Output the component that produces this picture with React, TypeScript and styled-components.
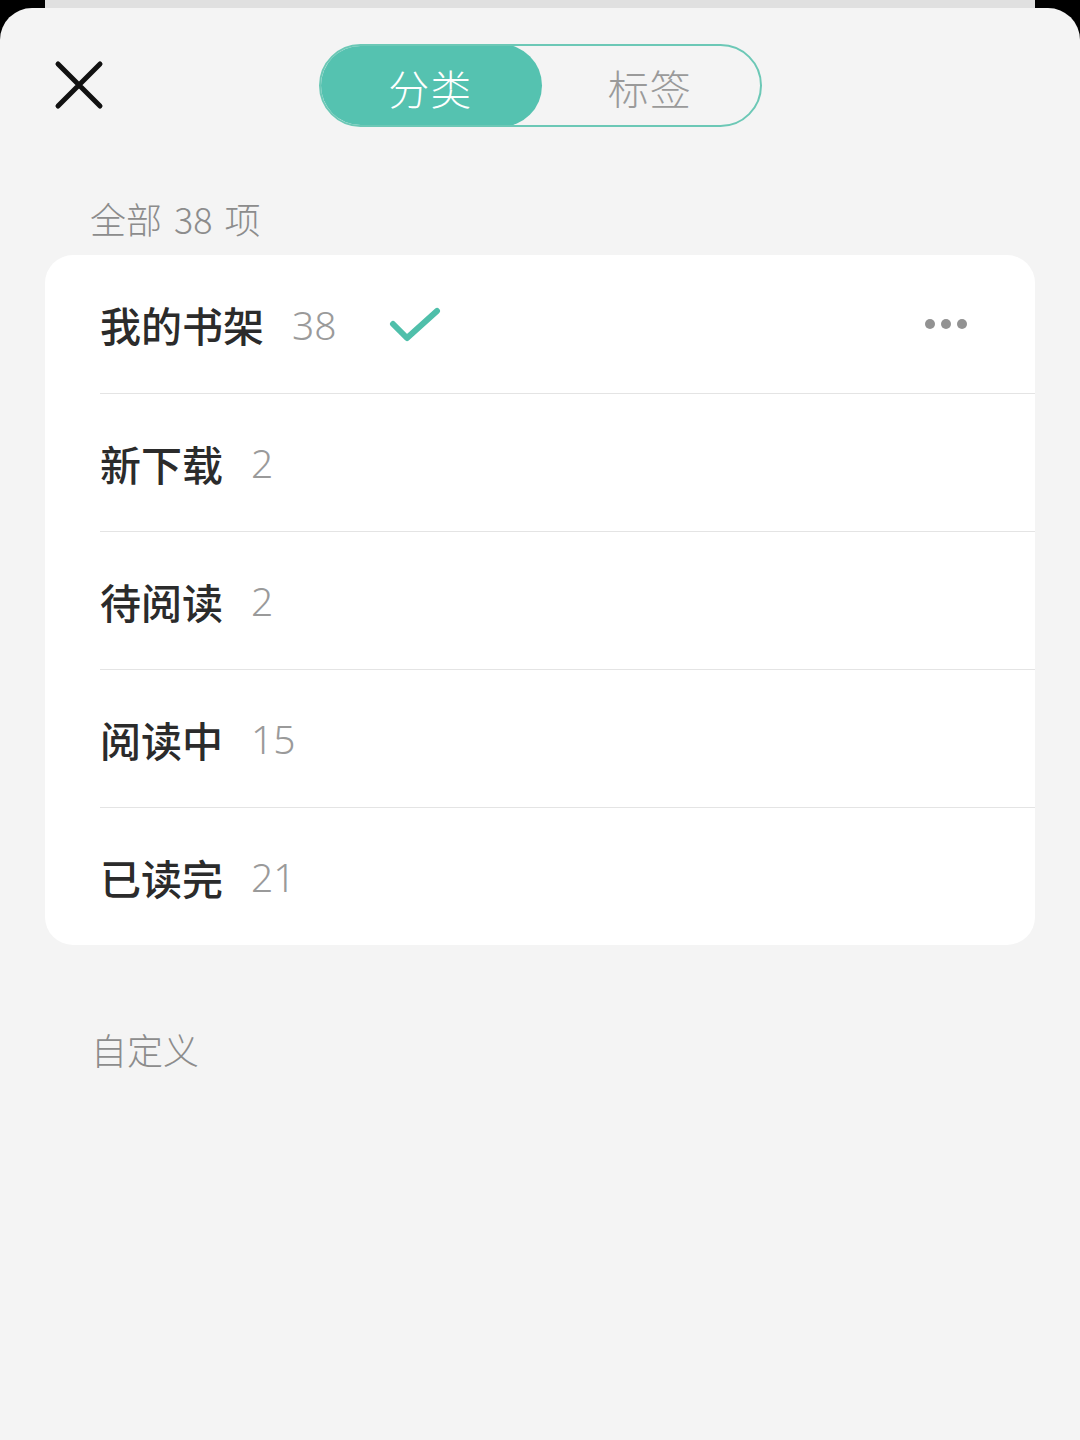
import {useState} from 'react';
import styled, {createGlobalStyle} from 'styled-components';

const GlobalStyle = createGlobalStyle`
    html, body {
        margin: 0;
        padding: 0;
        background: #000;
    }
    body {
        font-family: "Noto Sans CJK SC", "Noto Sans", sans-serif;
    }
`;

const categories = [
    {name: '我的书架', count: 38},
    {name: '新下载', count: 2},
    {name: '待阅读', count: 2},
    {name: '阅读中', count: 15},
    {name: '已读完', count: 21},
];

/**
 * 分类 / 标签 弹出面板
 */
const App = () => {
    const [tab, setTab] = useState<'category' | 'tag'>('category');
    const [selected] = useState(0);

    return <Screen>
        <GlobalStyle/>
        <BackSheet/>
        <Sheet>
            <Header>
                <CloseButton type="button" aria-label="关闭">
                    <svg width="50" height="50" viewBox="0 0 50 50">
                        <path d="M4 4 L46 46 M46 4 L4 46" stroke="#111" strokeWidth="5" strokeLinecap="round"/>
                    </svg>
                </CloseButton>
                <Segment>
                    <SegmentItem $active={tab === 'category'} onClick={() => setTab('category')}>分类</SegmentItem>
                    <SegmentItem $active={tab === 'tag'} onClick={() => setTab('tag')}>标签</SegmentItem>
                </Segment>
            </Header>

            <SectionTitle>全部 38 项</SectionTitle>
            <Card>
                {categories.map((c, i) => (
                    <Row key={c.name}>
                        <RowName>{c.name}</RowName>
                        <RowCount>{c.count}</RowCount>
                        {i === selected && <>
                            <Check width="52" height="38" viewBox="0 0 52 38">
                                <path d="M4 18 L18 32 L48 5" fill="none" stroke="#4fbfaa" strokeWidth="6" strokeLinecap="round" strokeLinejoin="round"/>
                            </Check>
                            <More>
                                <Dot/><Dot/><Dot/>
                            </More>
                        </>}
                    </Row>
                ))}
            </Card>

            <CustomTitle>自定义</CustomTitle>
        </Sheet>
    </Screen>;
};

export default App;


const Screen = styled.div`
    width: 1080px;
    height: 1440px;
    background: #000;
    position: relative;
    overflow: hidden;
    display: flex;
    flex-direction: column;
`;

const BackSheet = styled.div`
    height: 8px;
    margin: 0 45px;
    background: #e0e0e0;
    flex-shrink: 0;
`;

const Sheet = styled.div`
    flex: 1;
    background: #f4f4f4;
    border-radius: 32px 32px 0 0;
    display: flex;
    flex-direction: column;
`;

const Header = styled.div`
    height: 120px;
    margin-top: 36px;
    position: relative;
    display: flex;
    justify-content: center;
    align-items: flex-start;
`;

const CloseButton = styled.button`
    position: absolute;
    left: 54px;
    top: 16px;
    width: 50px;
    height: 50px;
    padding: 0;
    border: none;
    background: none;
    display: flex;
`;

const Segment = styled.div`
    width: 443px;
    height: 83px;
    box-sizing: border-box;
    border: 2px solid #6cc8b6;
    border-radius: 42px;
    display: flex;
    overflow: hidden;
`;

const SegmentItem = styled.div<{ $active: boolean }>`
    flex: 1;
    display: flex;
    align-items: center;
    justify-content: center;
    font-size: 41px;
    font-weight: 300;
    letter-spacing: 1px;
    border-radius: 42px;
    margin: -2px;
    padding-top: 2px;
    cursor: pointer;
    color: ${p => p.$active ? '#fff' : '#9a9a9a'};
    background: ${p => p.$active ? '#55c2b0' : 'transparent'};
`;

const SectionTitle = styled.div`
    padding-left: 90px;
    font-size: 36px;
    font-weight: 300;
    color: #8c8c8c;
    line-height: 48px;
    word-spacing: 4px;
    margin-top: 30px;
    margin-bottom: 13px;
`;

const Card = styled.div`
    margin: 0 45px;
    background: #fff;
    border-radius: 28px;
    display: flex;
    flex-direction: column;
`;

const Row = styled.div`
    box-sizing: border-box;
    height: 138px;
    display: flex;
    align-items: center;
    margin-left: 55px;
    position: relative;

    & + & {
        border-top: 1.5px solid #e4e4e4;
    }
`;

const RowName = styled.span`
    font-size: 41px;
    font-weight: 500;
    color: #2b2b2b;
`;

const RowCount = styled.span`
    font-family: "Noto Sans", "Noto Sans CJK SC", sans-serif;
    margin-left: 28px;
    font-size: 39px;
    font-weight: 300;
    color: #9a9a9a;
`;

const Check = styled.svg`
    margin-left: 52px;
    margin-top: 2px;
`;

const More = styled.div`
    margin-left: auto;
    margin-right: 68px;
    display: flex;
    gap: 6px;
`;

const Dot = styled.span`
    width: 10px;
    height: 10px;
    border-radius: 50%;
    background: #929292;
`;

const CustomTitle = styled.div`
    padding-left: 91px;
    margin-top: 80px;
    font-size: 36px;
    font-weight: 300;
    color: #8c8c8c;
    line-height: 48px;
`;
